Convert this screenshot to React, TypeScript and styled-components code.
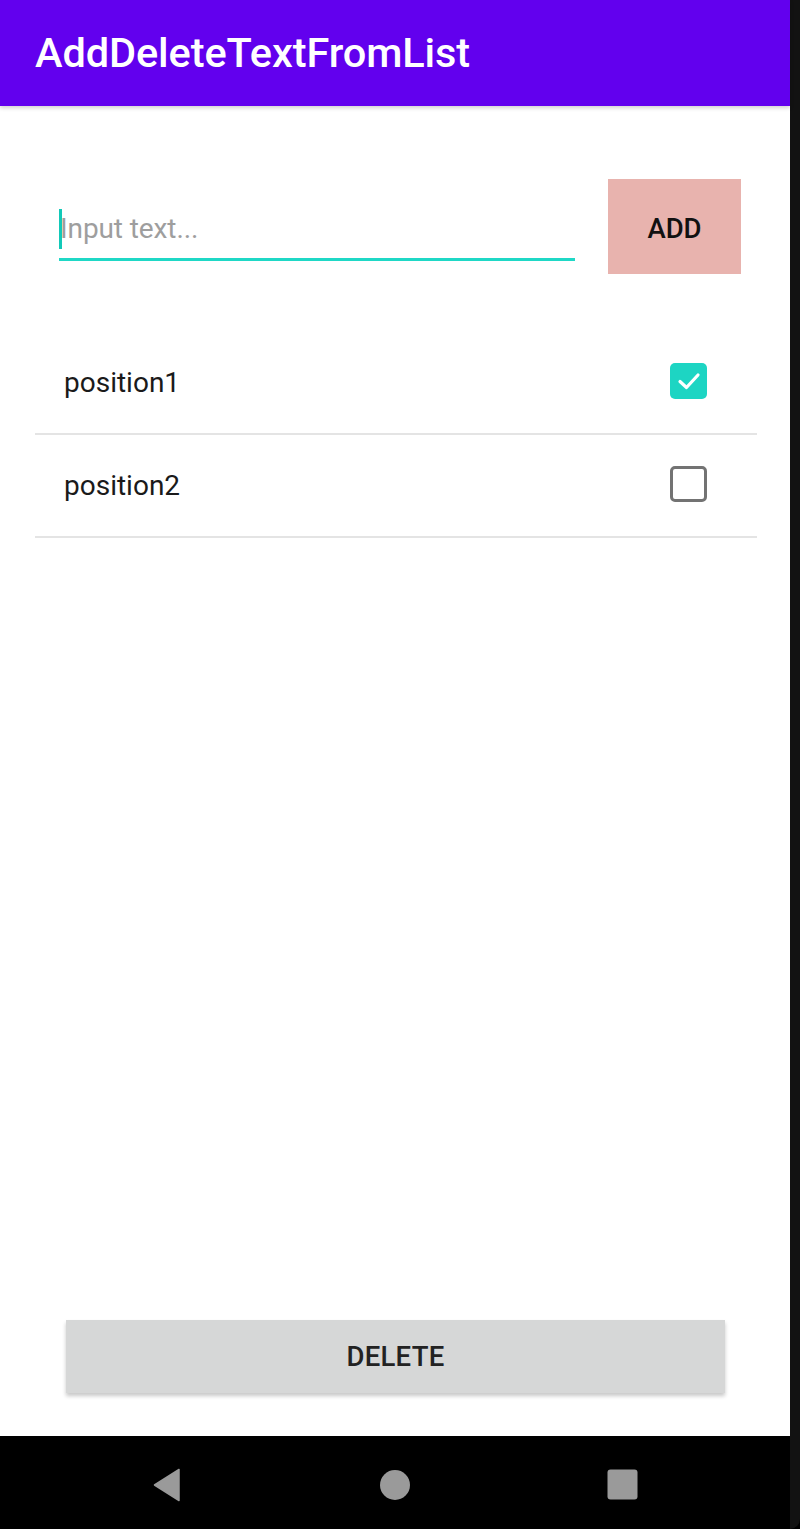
import React from "react";
import styled, { createGlobalStyle } from "styled-components";

const Global = createGlobalStyle`
  html, body { margin: 0; padding: 0; background: #000; }
  body { font-family: Roboto, "Noto Sans", Arial, sans-serif; }
  * { box-sizing: border-box; }
`;

const Device = styled.div`
  width: 800px;
  height: 1529px;
  display: flex;
  background: #000;
  overflow: hidden;
`;

const Screen = styled.div`
  width: 790px;
  display: flex;
  flex-direction: column;
`;

const Bezel = styled.div`
  width: 10px;
  background: #121212;
  border-bottom-right-radius: 40px;
`;

const Toolbar = styled.header`
  height: 106px;
  background: #6200ee;
  display: flex;
  align-items: center;
  padding-left: 35px;
  box-shadow: 0 2px 4px rgba(0, 0, 0, 0.18);
  position: relative;
  z-index: 1;
`;

const Title = styled.h1`
  margin: 0 0 2px 0;
  color: #fff;
  font-family: Roboto, sans-serif;
  font-weight: 500;
  font-size: 41.5px;
  letter-spacing: -0.1px;
`;

const Content = styled.main`
  flex: 1;
  background: #fff;
  display: flex;
  flex-direction: column;
  padding: 73px 33px 0 35px;
`;

const InputRow = styled.div`
  display: flex;
  align-items: stretch;
  height: 95px;
  padding-left: 24px;
  gap: 33px;
  margin-right: 16px;
`;

const Field = styled.div`
  width: 516px;
  display: flex;
  align-items: center;
  border-bottom: 3px solid #1fd8c6;
  margin-bottom: 13px;
  padding-top: 20px;
`;

const Cursor = styled.span`
  width: 3px;
  height: 40px;
  background: #12c9b8;
  margin-right: -2px;
`;

const Placeholder = styled.span`
  color: #9e9e9e;
  font-size: 28px;
  font-family: Roboto, sans-serif;
  letter-spacing: -0.1px;
`;

const AddButton = styled.button`
  width: 133px;
  border: none;
  background: #e8b3ae;
  color: #111;
  font-family: Roboto, sans-serif;
  font-weight: 500;
  font-size: 27.5px;
  padding: 4px 0 0 0;
`;

const List = styled.div`
  margin-top: 58px;
  display: flex;
  flex-direction: column;
`;

const Row = styled.div`
  height: 103px;
  display: flex;
  align-items: center;
  justify-content: space-between;
  padding: 0 50px 0 29px;
  border-bottom: 2px solid #e4e4e4;
`;

const RowText = styled.span`
  font-family: Roboto, sans-serif;
  font-size: 28px;
  color: #1a1a1a;
  margin-top: 0px;
`;

const Box = styled.span<{ $checked: boolean }>`
  width: 37px;
  height: 36px;
  border-radius: 5px;
  display: flex;
  align-items: center;
  justify-content: center;
  margin-top: -4px;
  background: ${(p) => (p.$checked ? "#1dd5c3" : "transparent")};
  border: ${(p) => (p.$checked ? "none" : "3px solid #737373")};
`;

const DeleteButton = styled.button`
  margin: auto 0 43px 31px;
  width: 659px;
  height: 73px;
  border: none;
  background: #d6d7d7;
  box-shadow: 0 3px 4px rgba(0, 0, 0, 0.22);
  font-family: Roboto, sans-serif;
  font-weight: 500;
  font-size: 27.5px;
  color: #222;
  letter-spacing: 0.3px;
`;

const NavBar = styled.nav`
  height: 93px;
  background: #000;
  display: grid;
  grid-template-columns: 1fr 1fr 1fr;
  align-items: center;
  justify-items: center;
  padding: 4px 0 0 0;
`;

const NavIcon = styled.svg`
  display: block;
`;

function Check({ checked }: { checked: boolean }) {
  return (
    <Box $checked={checked}>
      {checked && (
        <svg width="26" height="22" viewBox="0 0 26 22">
          <path d="M4 11.5 L10.5 17.5 L22 5" fill="none" stroke="#fff" strokeWidth="3.2" strokeLinecap="round" strokeLinejoin="round" />
        </svg>
      )}
    </Box>
  );
}

export default function App() {
  const items = [
    { label: "position1", checked: true },
    { label: "position2", checked: false },
  ];
  return (
    <Device>
      <Global />
      <Screen>
        <Toolbar>
          <Title>AddDeleteTextFromList</Title>
        </Toolbar>
        <Content>
          <InputRow>
            <Field>
              <Cursor />
              <Placeholder>Input text...</Placeholder>
            </Field>
            <AddButton>ADD</AddButton>
          </InputRow>
          <List>
            {items.map((it) => (
              <Row key={it.label}>
                <RowText>{it.label}</RowText>
                <Check checked={it.checked} />
              </Row>
            ))}
          </List>
          <DeleteButton>DELETE</DeleteButton>
        </Content>
        <NavBar>
          <NavIcon width="30" height="34" viewBox="0 0 30 34" style={{ marginLeft: 70 }}>
            <path d="M27 1.5 L27 32.5 L2.5 17 Z" fill="#9a9a9a" strokeLinejoin="round" stroke="#9a9a9a" strokeWidth="1.5" />
          </NavIcon>
          <NavIcon width="32" height="32" viewBox="0 0 32 32">
            <circle cx="16" cy="16" r="15" fill="#9a9a9a" />
          </NavIcon>
          <NavIcon width="31" height="31" viewBox="0 0 31 31" style={{ marginRight: 72 }}>
            <rect x="0.5" y="0.5" width="30" height="30" rx="3" fill="#9a9a9a" />
          </NavIcon>
        </NavBar>
      </Screen>
      <Bezel />
    </Device>
  );
}
